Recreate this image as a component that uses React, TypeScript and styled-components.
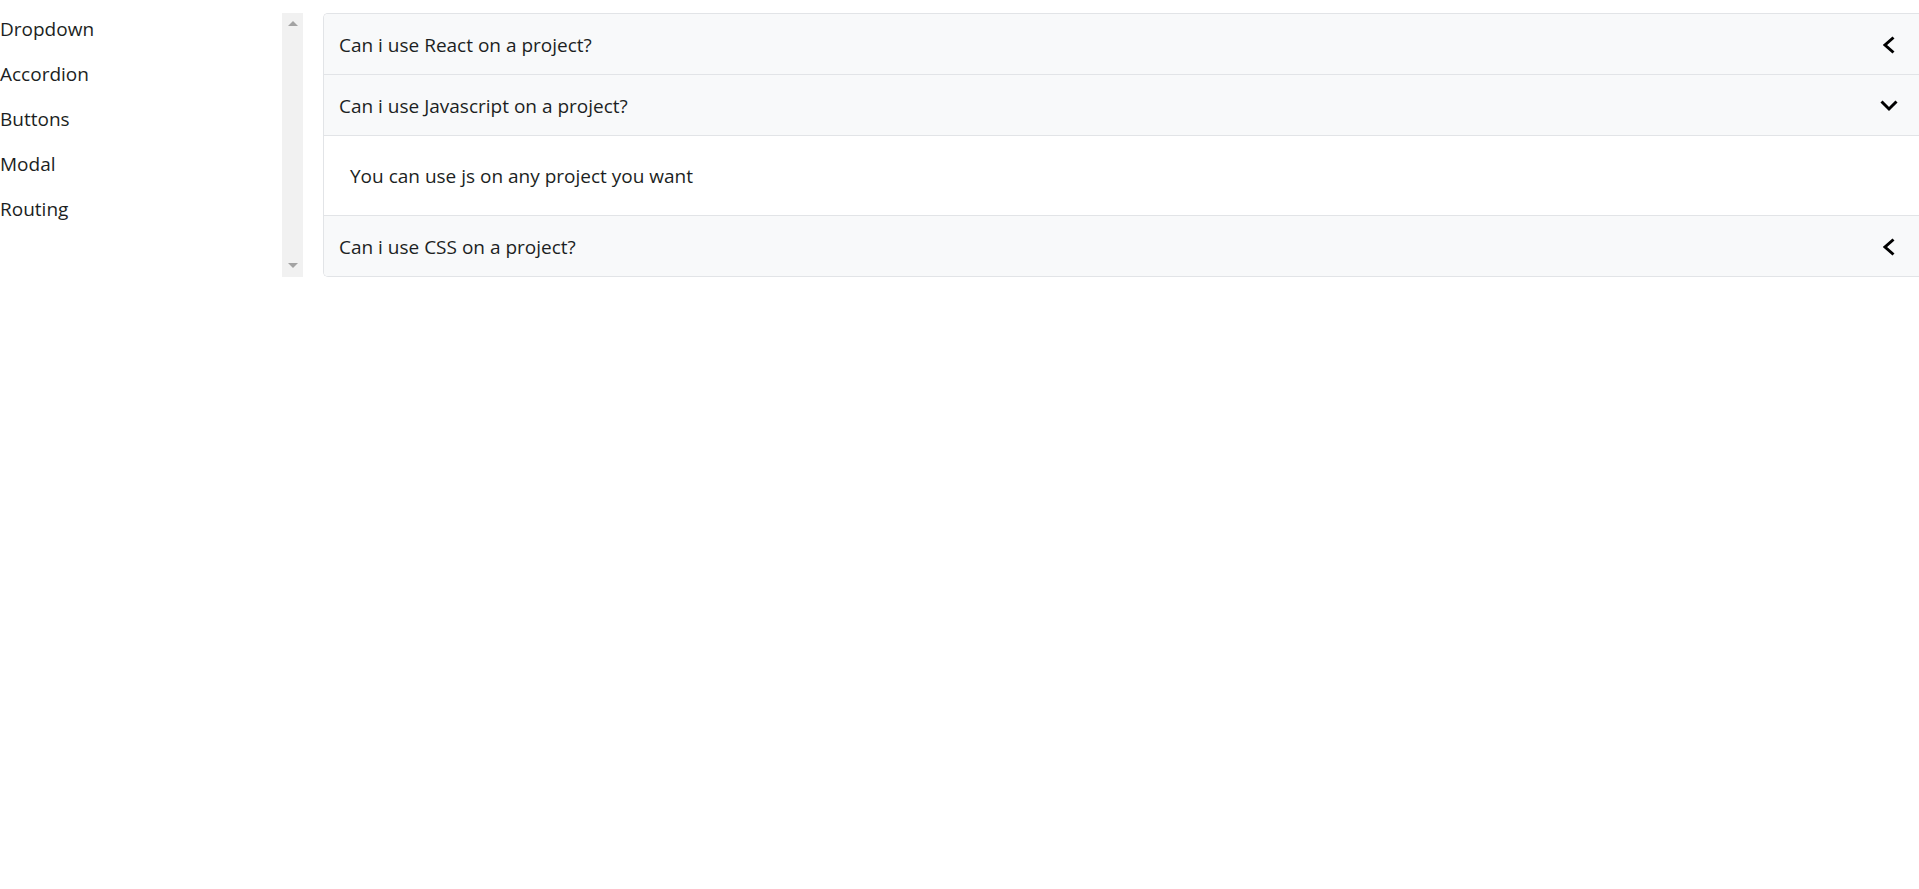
import React, { useState } from "react";
import styled, { createGlobalStyle } from "styled-components";

const GlobalStyle = createGlobalStyle`
  html, body {
    margin: 0;
    padding: 0;
    background: #ffffff;
  }
  body {
    font-family: "Open Sans", "Noto Sans", "Liberation Sans", sans-serif;
    color: #212529;
  }
`;

const Page = styled.div`
  display: flex;
  align-items: stretch;
  padding-top: 13px;
  gap: 20px;
`;

const Sidebar = styled.aside`
  display: flex;
  flex: 0 0 303px;
`;

const NavList = styled.ul`
  list-style: none;
  margin: 0;
  padding: 0;
  width: 282px;
  display: flex;
  flex-direction: column;
  gap: 13px;
`;

const NavItem = styled.li`
  font-size: 19px;
  line-height: 32px;
  height: 32px;
  color: #1c1f23;
  cursor: pointer;
`;

const ScrollTrack = styled.div`
  width: 21px;
  background: #f1f1f1;
  display: flex;
  flex-direction: column;
  justify-content: space-between;
  align-items: center;
  padding: 8px 0 9px;
  box-sizing: border-box;
`;

const Arrow = styled.span<{ $dir: "up" | "down" }>`
  width: 0;
  height: 0;
  border-left: 5px solid transparent;
  border-right: 5px solid transparent;
  ${(p) =>
    p.$dir === "up"
      ? "border-bottom: 5px solid #a3a3a3;"
      : "border-top: 5px solid #a3a3a3;"}
`;

const Accordion = styled.div`
  flex: 1;
  border: 1px solid #e2e4e7;
  border-right: none;
  border-radius: 5px 0 0 5px;
  overflow: hidden;
  display: flex;
  flex-direction: column;
`;

const Item = styled.div`
  & + & {
    border-top: 1px solid #e2e4e7;
  }
`;

const Header = styled.button`
  all: unset;
  box-sizing: border-box;
  width: 100%;
  height: 60px;
  display: flex;
  align-items: center;
  justify-content: space-between;
  padding: 1px 20px 0 15px;
  background: #f8f9fa;
  font-family: "Open Sans", "Noto Sans", "Liberation Sans", sans-serif;
  font-size: 19px;
  color: #1c1f23;
  cursor: pointer;
`;

const Body = styled.div`
  height: 80px;
  display: flex;
  align-items: center;
  padding: 1px 26px 0;
  border-top: 1px solid #e2e4e7;
  font-size: 19px;
  color: #1c1f23;
  background: #ffffff;
  box-sizing: border-box;
`;

const IconBox = styled.span`
  width: 20px;
  height: 20px;
  display: flex;
  align-items: center;
  justify-content: center;
`;

const ChevronLeft = () => (
  <svg width="14" height="20" viewBox="0 0 14 20" aria-hidden="true">
    <polyline
      points="11.5,2.5 3,10 11.5,17.5"
      fill="none"
      stroke="#000"
      strokeWidth="3"
      strokeLinejoin="miter"
    />
  </svg>
);

const ChevronDown = () => (
  <svg width="20" height="14" viewBox="0 0 20 14" aria-hidden="true">
    <polyline
      points="2.5,2.5 10,10 17.5,2.5"
      fill="none"
      stroke="#000"
      strokeWidth="3"
      strokeLinejoin="miter"
    />
  </svg>
);

const navItems = ["Dropdown", "Accordion", "Buttons", "Modal", "Routing"];

const faq = [
  { q: "Can i use React on a project?", a: "You can use React on any project you want" },
  { q: "Can i use Javascript on a project?", a: "You can use js on any project you want" },
  { q: "Can i use CSS on a project?", a: "You can use CSS on any project you want" },
];

export default function App() {
  const [open, setOpen] = useState<number | null>(1);
  return (
    <>
      <GlobalStyle />
      <Page>
        <Sidebar>
          <NavList>
            {navItems.map((n) => (
              <NavItem key={n}>{n}</NavItem>
            ))}
          </NavList>
          <ScrollTrack>
            <Arrow $dir="up" />
            <Arrow $dir="down" />
          </ScrollTrack>
        </Sidebar>
        <Accordion>
          {faq.map((f, i) => (
            <Item key={f.q}>
              <Header onClick={() => setOpen(open === i ? null : i)}>
                <span>{f.q}</span>
                <IconBox>{open === i ? <ChevronDown /> : <ChevronLeft />}</IconBox>
              </Header>
              {open === i && <Body>{f.a}</Body>}
            </Item>
          ))}
        </Accordion>
      </Page>
    </>
  );
}
